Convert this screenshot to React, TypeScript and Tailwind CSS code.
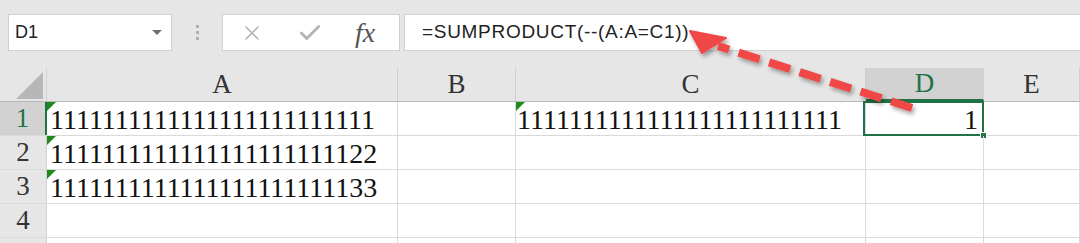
import { X, Check } from 'lucide-react';

// Column widths include the 1px right grid line
const COLS = [
    { key: 'A', w: 'w-[351px]' },
    { key: 'B', w: 'w-[118px]' },
    { key: 'C', w: 'w-[350px]' },
    { key: 'D', w: 'w-[118px]' },
    { key: 'E', w: 'flex-1' },
];

const ROWS: Record<string, string>[] = [
    { A: '1111111111111111111111111', C: '1111111111111111111111111', D: '1' },
    { A: '1111111111111111111111122' },
    { A: '1111111111111111111111133' },
    {},
    {},
];

const SERIF = "font-['Liberation_Serif',serif]";

const ErrorMark = () => (
    <div className="absolute left-0 top-0 w-0 h-0 border-t-[9px] border-r-[9px] border-t-[#1e8a1e] border-r-transparent" />
);

const Toolbar = () => (
    <div className="h-[68px] bg-[#e6e6e6] pt-[14px] flex items-start font-['Liberation_Sans',sans-serif]">
        {/* Name box */}
        <div className="ml-[8px] w-[164px] h-[37px] bg-white border border-[#d0d0d0] flex items-center justify-between pl-[6px] pr-[9px]">
            <span className="text-[18px] text-[#222]">D1</span>
            <span className="w-0 h-0 border-l-[5px] border-r-[5px] border-t-[5px] border-l-transparent border-r-transparent border-t-[#6f6f6f]" />
        </div>
        {/* separator dots */}
        <div className="w-[50px] h-[37px] flex flex-col items-center justify-center gap-[3px]">
            <span className="w-[3px] h-[3px] bg-[#b0b0b0]" />
            <span className="w-[3px] h-[3px] bg-[#b0b0b0]" />
            <span className="w-[3px] h-[3px] bg-[#b0b0b0]" />
        </div>
        {/* cancel / enter / fx */}
        <div className="w-[178px] h-[37px] bg-white border border-[#d0d0d0] flex items-center">
            <X className="ml-[17px] w-[24px] h-[24px] text-[#b4b4b4]" strokeWidth={1.6} />
            <Check className="ml-[33px] w-[26px] h-[26px] text-[#b4b4b4]" strokeWidth={2.6} />
            <span className={`ml-[32px] ${SERIF} italic text-[28px] text-[#555] leading-none`}>fx</span>
        </div>
        {/* formula */}
        <div className="ml-[4px] flex-1 h-[37px] bg-white border border-[#d0d0d0] border-r-0 flex items-center pl-[17px]">
            <span className="text-[19px] tracking-[0.7px] text-[#222]">=SUMPRODUCT(--(A:A=C1))</span>
        </div>
    </div>
);

const HeaderRow = () => (
    <div className={`flex h-[34px] bg-[#e6e6e6] border-b border-[#b9b9b9] ${SERIF}`}>
        <div className="w-[47px] border-r border-[#cfcfcf] flex items-end justify-end pr-[3px] pb-[2px]">
            <div className="w-0 h-0 border-b-[27px] border-l-[27px] border-b-[#b7b7b7] border-l-transparent" />
        </div>
        {COLS.map(c => (
            <div
                key={c.key}
                className={`${c.w} border-r border-[#cfcfcf] flex items-center justify-center text-[27px] ${c.key === 'D' ? 'bg-[#d2d2d2] text-[#217346] border-b-2 border-b-[#217346]' : 'text-[#333]'}`}
            >
                {c.key}
            </div>
        ))}
    </div>
);

export default function App() {
    return (
        <div className="relative w-[1080px] h-[243px] overflow-hidden bg-white">
            <Toolbar />
            <HeaderRow />
            {ROWS.map((row, i) => (
                <div key={i} className={`flex h-[34px] border-b border-[#dadada] ${SERIF}`}>
                    <div className={`w-[47px] flex items-center justify-center text-[27px] ${i === 0 ? 'bg-[#d2d2d2] text-[#217346] border-r-2 border-[#217346]' : 'bg-[#e6e6e6] text-[#333] border-r border-[#cfcfcf]'}`}>
                        {i < 4 ? i + 1 : ''}
                    </div>
                    {COLS.map(c => {
                        const v = row[c.key];
                        const selected = i === 0 && c.key === 'D';
                        return (
                            <div key={c.key} className={`${c.w} relative border-r border-[#dadada] flex items-end text-[28px] leading-none text-[#111] pb-[1px] ${c.key === 'D' ? 'justify-end pr-[5px]' : c.key === 'C' ? 'pl-[1px]' : 'pl-[3px]'}`}>
                                {v && c.key !== 'D' && <ErrorMark />}
                                {v}
                                {selected && (
                                    <>
                                        <div className="absolute -left-[3px] -top-[1px] -right-[1px] -bottom-[1px] border-2 border-[#217346]" />
                                        <div className="absolute -right-[4px] -bottom-[4px] w-[7px] h-[7px] bg-[#217346] border border-white" />
                                    </>
                                )}
                            </div>
                        );
                    })}
                </div>
            ))}

            {/* callout arrow drawn over the sheet */}
            <svg className="absolute left-0 top-0 pointer-events-none" width="1080" height="243" viewBox="0 0 1080 243">
                <defs>
                    <filter id="sh" x="-10%" y="-30%" width="130%" height="180%">
                        <feDropShadow dx="2" dy="3" stdDeviation="2" floodColor="#000" floodOpacity="0.35" />
                    </filter>
                </defs>
                <g filter="url(#sh)" fill="#f04646" stroke="#f04646">
                    <path d="M912 108 L718 46" strokeWidth="8" strokeDasharray="22 10" fill="none" />
                    <polygon points="690,31 702,53 726,38" strokeWidth="2" strokeLinejoin="round" />
                </g>
            </svg>
        </div>
    );
}
